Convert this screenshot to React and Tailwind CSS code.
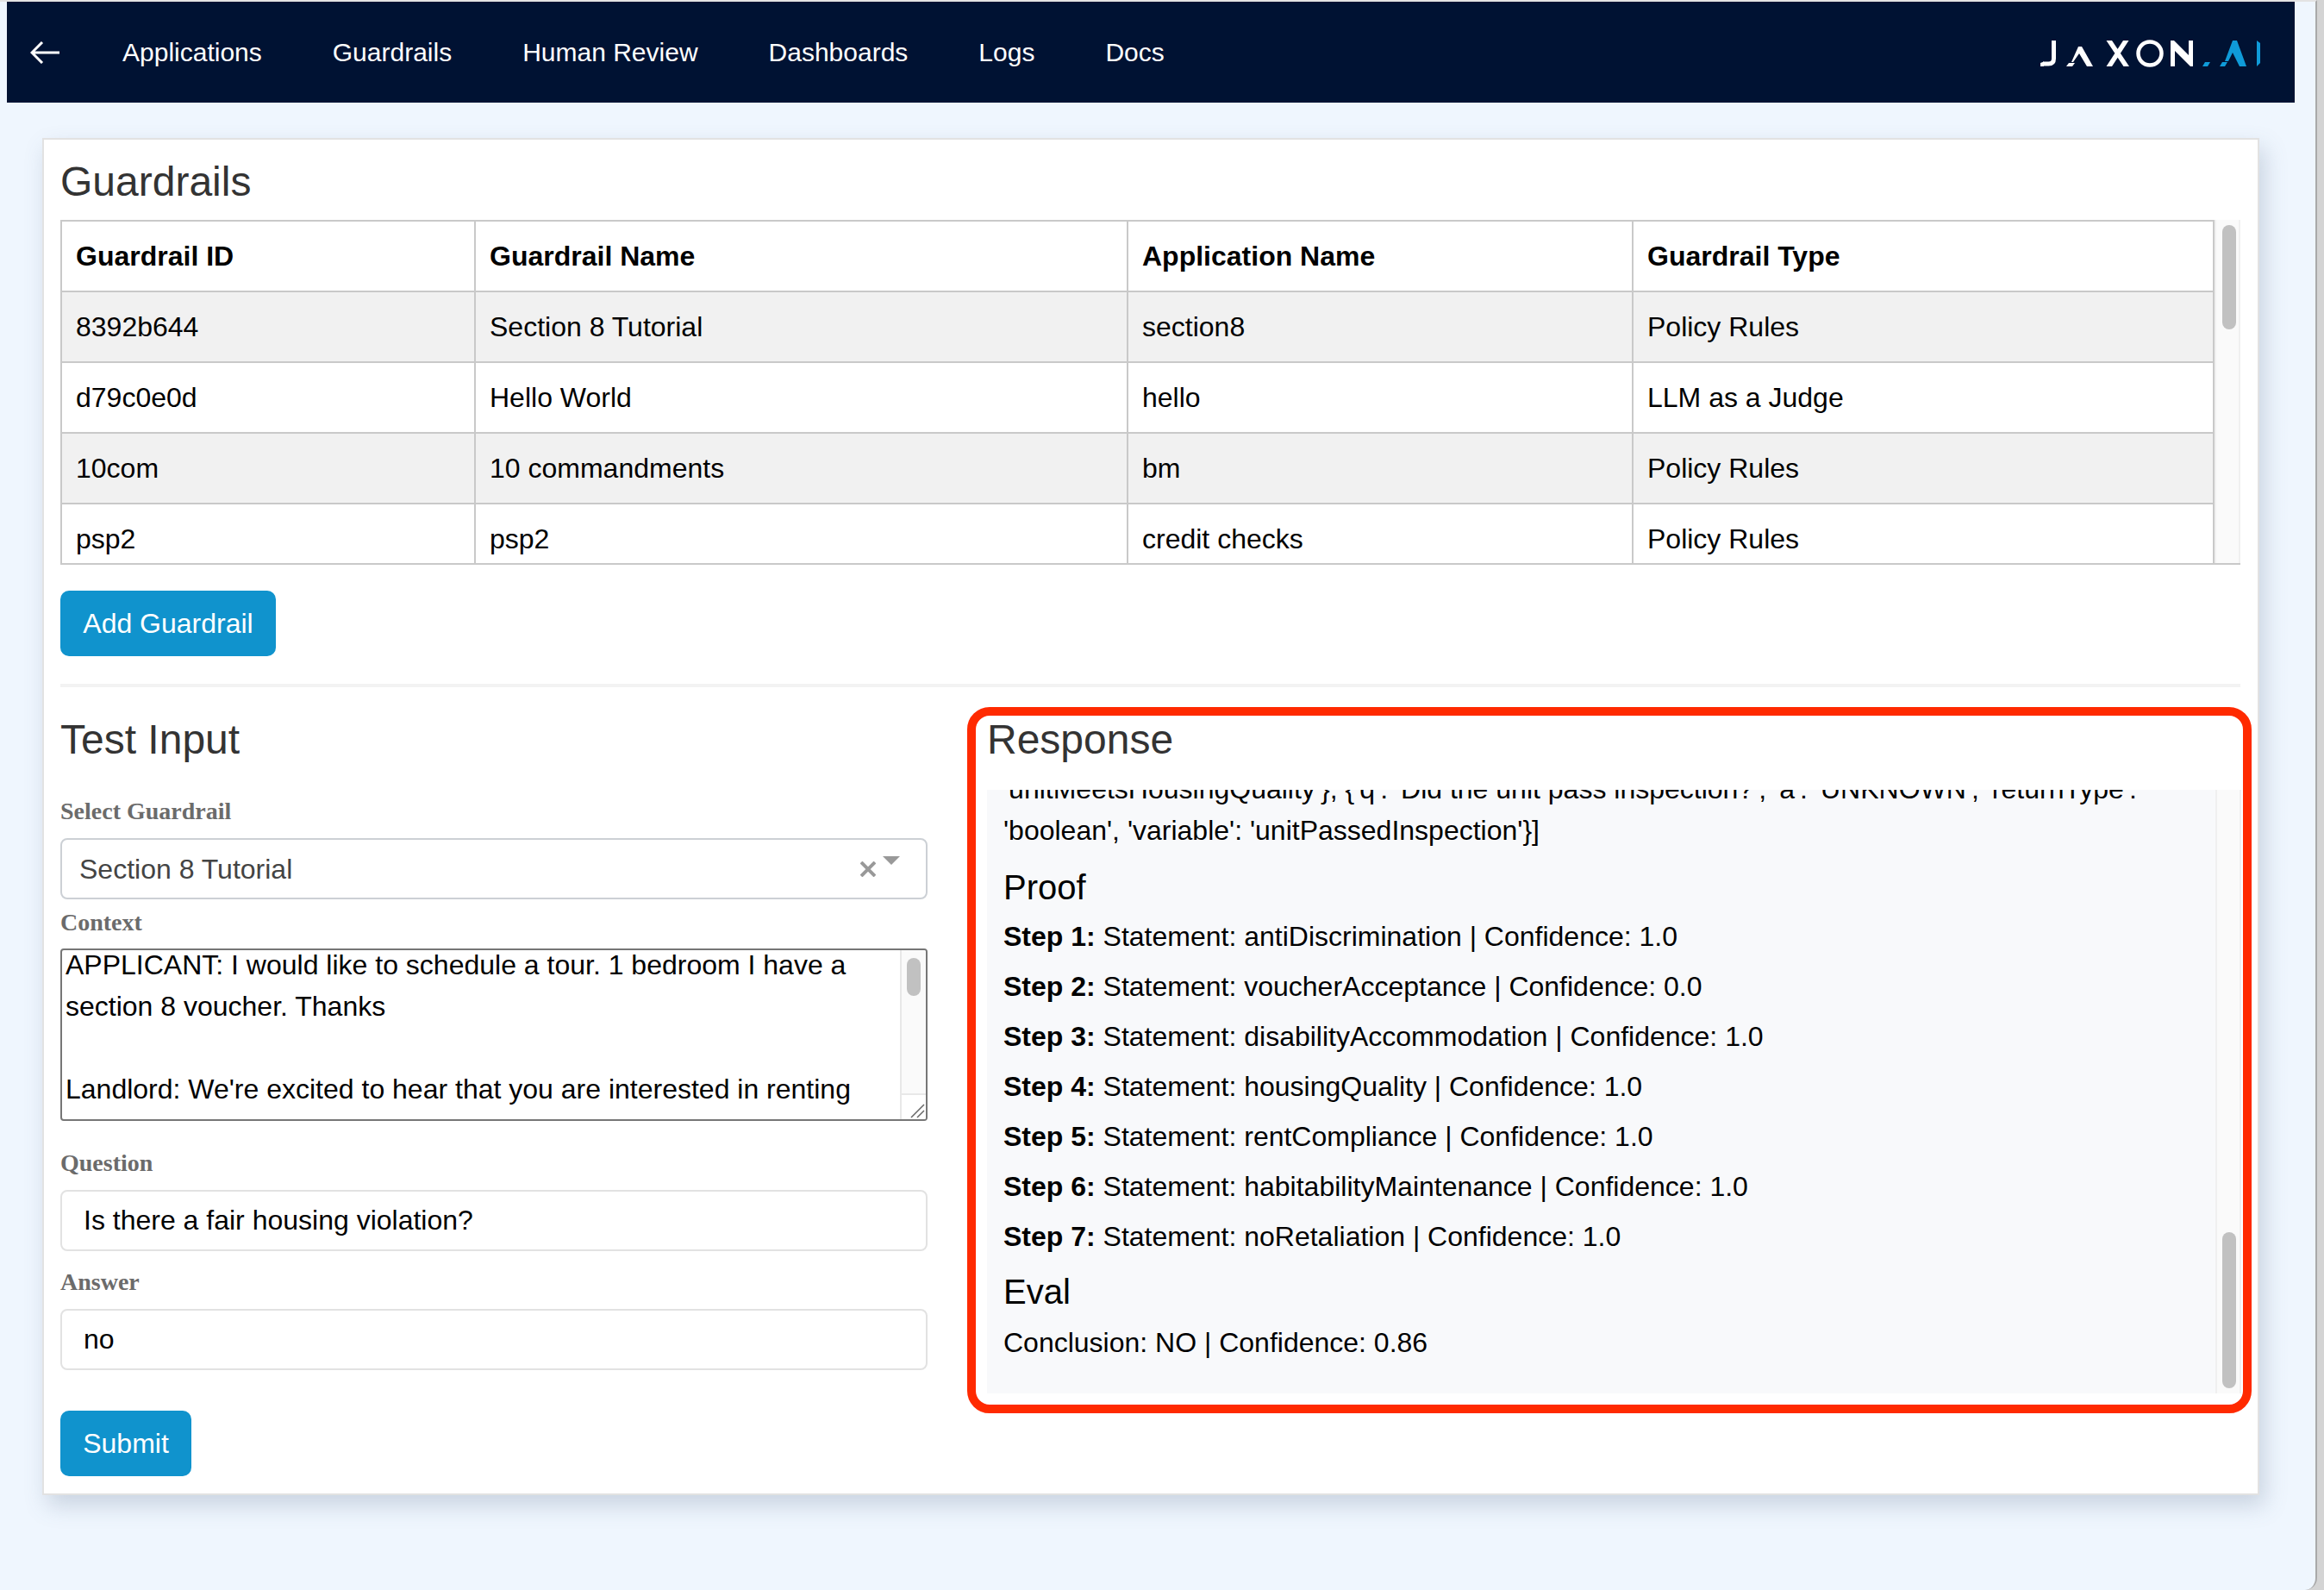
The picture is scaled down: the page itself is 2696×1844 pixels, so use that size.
const navLinks = ["Applications", "Guardrails", "Human Review", "Dashboards", "Logs", "Docs"];

const guardrails = [
  ["8392b644", "Section 8 Tutorial", "section8", "Policy Rules"],
  ["d79c0e0d", "Hello World", "hello", "LLM as a Judge"],
  ["10com", "10 commandments", "bm", "Policy Rules"],
  ["psp2", "psp2", "credit checks", "Policy Rules"],
];

const steps = [
  "antiDiscrimination | Confidence: 1.0",
  "voucherAcceptance | Confidence: 0.0",
  "disabilityAccommodation | Confidence: 1.0",
  "housingQuality | Confidence: 1.0",
  "rentCompliance | Confidence: 1.0",
  "habitabilityMaintenance | Confidence: 1.0",
  "noRetaliation | Confidence: 1.0",
];

const Logo = () => (
  <svg width="290" height="60" viewBox="0 0 290 60" fill="none">
    <path d="M32.500 16V37q0 6-6 6H20" stroke="#fff" strokeWidth="5" />
    <path d="M17 42l4-1.500v5.500h-4z" fill="#fff" />
    <path d="M61 23h4l13 23h-7L62 31l-7 10h-2z" fill="#fff" />
    <path d="M50 42h7l-3 4h-7z" fill="#fff" />
    <path d="M93.500 16h6.500l20 30h-6.500zM113 16h6.500L100 46h-6.500z" fill="#fff" />
    <circle cx="144" cy="31" r="13.500" stroke="#fff" strokeWidth="4.500" />
    <path d="M168 16h4l17 17V16h5v30h-3L173 28v18h-5z" fill="#fff" />
    <path d="M208 41h6l-3 5h-6z" fill="#0f9bd9" />
    <path d="M240 16h5l11 30h-8l-8-16-5 10h-4z" fill="#0f9bd9" />
    <path d="M228 41h6l-3 5h-6z" fill="#0f9bd9" />
    <path d="M268 16l4 3v23l-4 4z" fill="#0f9bd9" />
  </svg>
);

const Scrollbar = ({ thumb }) => (
  <div className="relative h-full w-[30px] shrink-0 bg-[#fafafa] border-x-2 border-[#f0f0f0]">
    <div className={`absolute w-4 rounded-lg bg-[#c1c1c1] ${thumb}`} />
  </div>
);

const Label = ({ children, className = "" }) => (
  <label className={`block font-['Liberation_Serif',serif] font-bold text-[28px] leading-[27px] text-[#6b6b6b] ${className}`}>
    {children}
  </label>
);

export default function App() {
  return (
    <div className="h-[1844px] w-full bg-[#d4d4d4] font-['Liberation_Sans',Arial,sans-serif] overflow-hidden">
      <div className="h-full w-[2688px] bg-[#eff6fe] border-r-2 border-r-[#a9a9a9] border-t-2 border-t-[#e3e3e3] rounded-br-[14px]">
        <nav className="ml-2 w-[2654px] h-[117px] bg-[#001233] flex items-center pl-[27px] pr-[22px] text-white">
          <svg width="34" height="26" viewBox="0 0 34 26" fill="none" stroke="#fff" strokeWidth="3" className="shrink-0">
            <path d="M2 13H34M14 1L2 13l12 12" />
          </svg>
          <div className="flex ml-[73px] gap-[82px] text-[30px]">
            {navLinks.map((link) => (
              <a key={link}>{link}</a>
            ))}
          </div>
          <div className="ml-auto">
            <Logo />
          </div>
        </nav>

        <main className="ml-[49px] mt-[41px] w-[2572px] h-[1574px] bg-white border-2 border-[#e2e2e2] shadow-[6px_12px_24px_rgba(90,110,140,0.25)] pl-[19px] pr-[7px] pt-[21px]">
          <h2 className="text-[48px] leading-[56px] text-[#333]">Guardrails</h2>

          <div className="flex mt-4 w-[2529px] h-[400px] border-b-2 border-[#c9c9c9] overflow-hidden">
            <div className="flex-1 overflow-hidden">
              <table className="w-[2499px] table-fixed border-collapse text-[32px] text-black">
                <thead>
                  <tr className="h-[82px]">
                    <th className="w-[480px] border-2 border-[#c9c9c9] text-left pl-4 font-bold">Guardrail ID</th>
                    <th className="w-[757px] border-2 border-[#c9c9c9] text-left pl-4 font-bold">Guardrail Name</th>
                    <th className="w-[586px] border-2 border-[#c9c9c9] text-left pl-4 font-bold">Application Name</th>
                    <th className="border-2 border-[#c9c9c9] text-left pl-4 font-bold">Guardrail Type</th>
                  </tr>
                </thead>
                <tbody>
                  {guardrails.map((row, i) => (
                    <tr key={row[0]} className={`h-[82px] ${i % 2 === 0 ? "bg-[#f1f1f1]" : "bg-white"}`}>
                      {row.map((cell) => (
                        <td key={cell} className="border-2 border-[#c9c9c9] pl-4">{cell}</td>
                      ))}
                    </tr>
                  ))}
                </tbody>
              </table>
            </div>
            <Scrollbar thumb="left-[7px] top-[6px] h-[121px]" />
          </div>

          <button className="block mt-[30px] w-[250px] h-[76px] rounded-[10px] bg-[#1093cd] text-white text-[32px]">
            Add Guardrail
          </button>

          <hr className="mt-8 w-[2529px] border-t-4 border-[#f3f3f3]" />

          <div className="flex mt-[23px]">
            <section className="w-[1006px] shrink-0">
              <h2 className="text-[48px] leading-[56px] text-[#333] mt-[10px]">Test Input</h2>
              <Label className="mt-[41px]">Select Guardrail</Label>
              <div className="mt-[18px] h-[71px] border-2 border-[#ccd0d5] rounded-lg flex items-center pl-5 pr-[30px] text-[32px] text-[#444]">
                <span>Section 8 Tutorial</span>
                <svg width="18" height="18" viewBox="0 0 18 18" stroke="#999" strokeWidth="4" className="ml-auto mt-[1px] shrink-0">
                  <path d="M1 1l16 16M17 1L1 17" />
                </svg>
                <span className="ml-2 mb-[20px] w-0 h-0 border-x-[10px] border-x-transparent border-t-[10px] border-t-[#999]" />
              </div>
              <Label className="mt-[13px]">Context</Label>
              <div className="mt-[17px] h-[200px] border-2 border-[#767676] rounded-[4px] flex overflow-hidden">
                <div className="flex-1 -mt-[7px] pl-1 text-[32px] leading-[48px] text-black whitespace-pre-wrap">
                  {"APPLICANT: I would like to schedule a tour. 1 bedroom I have a\nsection 8 voucher. Thanks\n\nLandlord: We're excited to hear that you are interested in renting"}
                </div>
                <div className="relative w-[30px] shrink-0 bg-[#fafafa] border-l-2 border-[#e8e8e8]">
                  <div className="absolute left-[6px] top-[9px] w-4 h-[44px] rounded-lg bg-[#c1c1c1]" />
                  <div className="absolute left-0 right-0 bottom-0 h-[30px] border-t-2 border-[#e8e8e8] bg-white">
                    <svg width="28" height="28" viewBox="0 0 28 28" stroke="#666" strokeWidth="1.5">
                      <path d="M11 26L26 11M18 26l8-8" />
                    </svg>
                  </div>
                </div>
              </div>
              <Label className="mt-[35px]">Question</Label>
              <input
                readOnly
                value="Is there a fair housing violation?"
                className="block mt-[18px] w-full h-[71px] border-2 border-[#e2e2e2] rounded-lg pl-[25px] text-[32px] text-black"
              />
              <Label className="mt-[22px]">Answer</Label>
              <input
                readOnly
                value="no"
                className="block mt-[18px] w-full h-[71px] border-2 border-[#e2e2e2] rounded-lg pl-[25px] text-[32px] text-black"
              />
              <button className="block mt-[47px] w-[152px] h-[76px] rounded-[10px] bg-[#1093cd] text-white text-[32px]">
                Submit
              </button>
            </section>

            <section className="ml-[46px] w-[1490px] h-[819px] shrink-0 border-[10px] border-[#ff2a00] rounded-[26px] bg-white">
              <h2 className="text-[48px] leading-[56px] text-[#333] ml-[13px]">Response</h2>
              <div className="flex h-[700px] ml-[13px] mr-[2px] mt-[30px] bg-[#f8f9fb] overflow-hidden">
                <div className="flex-1 overflow-hidden pl-[19px] text-[32px] text-black">
                  <p className="-mt-[25px] leading-[48px]">
                    'unitMeetsHousingQuality'}, {"{"}'q': 'Did the unit pass inspection?', 'a': 'UNKNOWN', 'returnType':
                  </p>
                  <p className="leading-[48px]">'boolean', 'variable': 'unitPassedInspection'}]</p>
                  <h3 className="mt-[18px] text-[40px] leading-[48px]">Proof</h3>
                  <div className="mt-[9px] flex flex-col gap-[10px]">
                    {steps.map((step, i) => (
                      <p key={step} className="leading-[48px]">
                        <b>Step {i + 1}:</b> Statement: {step}
                      </p>
                    ))}
                  </div>
                  <h3 className="mt-4 text-[40px] leading-[48px]">Eval</h3>
                  <p className="mt-[11px] leading-[48px]">Conclusion: NO | Confidence: 0.86</p>
                </div>
                <Scrollbar thumb="left-[6px] bottom-[6px] h-[181px]" />
              </div>
            </section>
          </div>
        </main>
      </div>
    </div>
  );
}
